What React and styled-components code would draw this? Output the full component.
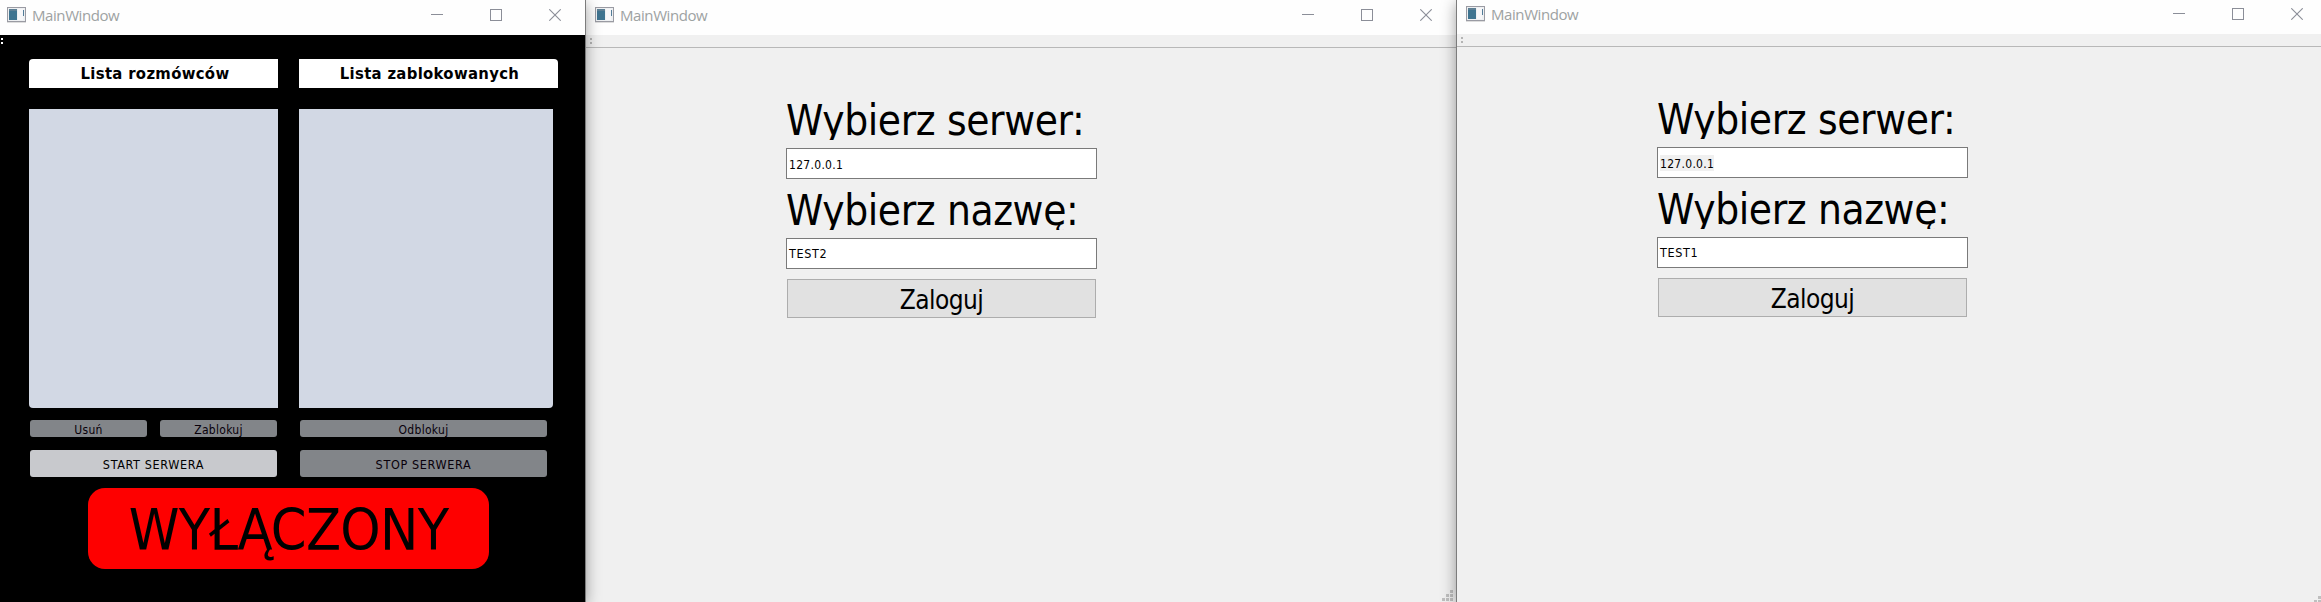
import React from 'react';
import styled, { createGlobalStyle } from 'styled-components';

const Global = createGlobalStyle`
  * { box-sizing: border-box; }
  body { margin: 0; background: #f0f0f0; overflow: hidden; }
  button, input { font-family: inherit; }
`;

const Desktop = styled.div`
  display: grid;
  grid-template-columns: 586px 870px 865px;
  width: 2321px;
  height: 602px;
  overflow: hidden;
  font-family: 'DejaVu Sans Condensed', 'DejaVu Sans', sans-serif;
  font-stretch: condensed;
  color: #000;
`;

const Window = styled.section`
  position: relative;
  z-index: ${p => (p.$raised ? 2 : 1)};
  display: flex;
  flex-direction: column;
  min-width: 0;
  height: 602px;
  background: ${p => (p.$dark ? '#000' : '#f0f0f0')};
  border: 0 solid #7c7c7c;
  border-right-width: ${p => (p.$edge === 'right' ? 1 : 0)}px;
  border-left-width: ${p => (p.$edge === 'left' ? 1 : 0)}px;
  box-shadow: ${p => (p.$raised ? '0 3px 14px rgba(0, 0, 0, 0.38)' : 'none')};
`;

const TitleBar = styled.header`
  display: flex;
  align-items: center;
  flex: none;
  height: ${p => p.$height}px;
  padding: 0 ${p => p.$right}px 6px ${p => p.$left}px;
  background: #fefefe;
`;

const Caption = styled.span`
  flex: 1;
  margin-left: 6px;
  font: 400 15px/28px 'Open Sans', sans-serif;
  letter-spacing: -0.42px;
  color: #9da2a2;
`;

const Controls = styled.div`
  display: flex;
  gap: 47px;
  svg { display: block; }
`;

const ToolBar = styled.div`
  flex: none;
  height: 13px;
  padding: 3px 0 0 ${p => p.$left}px;
  border-bottom: 1px solid ${p => (p.$dark ? '#000' : '#b8b8b8')};
  svg { display: block; }
`;

const ServerBody = styled.div`
  display: grid;
  grid-template-columns: 249px 259px;
  column-gap: 21px;
  padding: 11px 0 0 29px;
`;

const ListHeader = styled.div`
  height: 29px;
  padding-top: 1px;
  background: #fff;
  border-radius: ${p => (p.$side === 'left' ? '4px 0 0 0' : '0 4px 0 0')};
  font-size: 16.5px;
  font-weight: 700;
  line-height: 28px;
  letter-spacing: 0.33px;
  text-align: center;
  padding-left: ${p => (p.$side === 'left' ? 3 : 2)}px;
`;

const UserList = styled.div`
  width: ${p => p.$width}px;
  height: 299px;
  margin-top: 21px;
  background: #d2d8e4;
  border-radius: ${p => (p.$side === 'left' ? '0 0 0 4px' : '0 0 4px 0')};
`;

const Actions = styled.div`
  display: flex;
  gap: 13px;
  margin: ${p => p.$top}px 0 0 1px;
`;

const ServerButton = styled.button`
  width: ${p => p.$width}px;
  height: ${p => (p.$tall ? 27 : 17)}px;
  padding: ${p => (p.$tall ? 2 : 3)}px 0 0;
  border: 0;
  border-radius: 3px;
  background: ${p => (p.$light ? '#c8c9cd' : '#828589')};
  color: ${p => (p.$light ? '#000' : '#08000a')};
  font-size: ${p => (p.$tall ? 12.5 : 12)}px;
  line-height: ${p => (p.$tall ? 25 : 14)}px;
  letter-spacing: ${p => (p.$tall ? 0.65 : 0.3)}px;
`;

const Status = styled.div`
  width: 401px;
  height: 81px;
  margin: 11px 0 0 88px;
  padding-top: 5px;
  border-radius: 17px;
  background: #fe0000;
  font-size: 57px;
  line-height: 75px;
  letter-spacing: -0.7px;
  text-align: center;
`;

const LoginForm = styled.form`
  width: 311px;
  margin: 49px 0 0 200px;
`;

const Label = styled.label`
  display: block;
  height: 43px;
  overflow: hidden;
  font-size: 42px;
  line-height: 47px;
  letter-spacing: -0.4px;
  white-space: nowrap;
`;

const Field = styled.div`
  display: flex;
  align-items: center;
  height: 31px;
  margin: 8px 0 ${p => p.$gap}px;
  padding: 0 0 0 2px;
  border: 1px solid #7a7a7a;
  background: #fff;
`;

const Value = styled.span`
  height: 16px;
  padding: ${p => (p.$wide ? 0 : 1)}px 0 0;
  font-size: ${p => (p.$wide ? 12.5 : 12)}px;
  line-height: ${p => (p.$wide ? 16 : 17)}px;
  letter-spacing: ${p => (p.$wide ? 0.6 : 0.3)}px;
  background: ${p => (p.$marked ? '#f0f0f0' : 'transparent')};
`;

const LoginButton = styled.button`
  display: block;
  width: 309px;
  height: 39px;
  margin-left: 1px;
  padding: 3px 0 0;
  border: 1px solid #adadad;
  background: #e1e1e1;
  color: #000;
  font-size: 26px;
  line-height: 34px;
  letter-spacing: -0.55px;
`;

const Grip = styled.svg`
  position: absolute;
  right: ${p => p.$right}px;
  bottom: ${p => p.$bottom}px;
`;

function AppIcon() {
  return (
    <svg width="19" height="16" viewBox="0 0 19 16" shapeRendering="crispEdges">
      <rect y="14" width="19" height="2" fill="#ddd" />
      <rect x="0.5" y="0.5" width="18" height="14" fill="#eef0f2" stroke="#9a9ba3" />
      <rect x="2" y="2" width="8" height="11" fill="#3f7490" />
      <rect x="2" y="2" width="8" height="2" fill="#5d7f94" />
      <rect x="11" y="2" width="5" height="11" fill="#f7f7f9" />
      <rect x="16" y="3" width="1" height="6" fill="#527c98" />
    </svg>
  );
}

function WindowControls() {
  return (
    <Controls>
      <svg width="12" height="12"><path d="M0 5.5h12" stroke="#8b8e98" /></svg>
      <svg width="12" height="12"><rect x="0.5" y="0.5" width="11" height="11" fill="none" stroke="#8b8e98" /></svg>
      <svg width="12" height="12"><path d="M0.3 0.3L11.7 11.7M11.7 0.3L0.3 11.7" stroke="#8b8e98" strokeWidth="1.1" /></svg>
    </Controls>
  );
}

function Handle({ color }) {
  return (
    <svg width="3" height="7" fill={color} shapeRendering="crispEdges">
      <rect width="2" height="2" />
      <rect y="4" width="2" height="2" />
    </svg>
  );
}

function ResizeGrip({ right, bottom }) {
  const cells = [[8, 0], [4, 4], [8, 4], [0, 8], [4, 8], [8, 8]];
  return (
    <Grip $right={right} $bottom={bottom} width="11" height="11" fill="#bfbfbf" shapeRendering="crispEdges">
      {cells.map(([x, y]) => <rect key={`${x}-${y}`} x={x} y={y} width="3" height="3" />)}
    </Grip>
  );
}

function Bar({ height, left, right }) {
  return (
    <TitleBar $height={height} $left={left} $right={right}>
      <AppIcon />
      <Caption>MainWindow</Caption>
      <WindowControls />
    </TitleBar>
  );
}

function ServerWindow() {
  return (
    <Window $dark $raised $edge="right">
      <Bar height={35} left={7} right={24} />
      <ToolBar $dark $left={1}><Handle color="#fff" /></ToolBar>
      <ServerBody>
        <div>
          <ListHeader $side="left">Lista rozmówców</ListHeader>
          <UserList $side="left" $width={249} />
          <Actions $top={12}>
            <ServerButton $width={117}>Usuń</ServerButton>
            <ServerButton $width={117}>Zablokuj</ServerButton>
          </Actions>
          <Actions $top={13}>
            <ServerButton $tall $light $width={247}>START SERWERA</ServerButton>
          </Actions>
        </div>
        <div>
          <ListHeader $side="right">Lista zablokowanych</ListHeader>
          <UserList $side="right" $width={254} />
          <Actions $top={12}>
            <ServerButton $width={247}>Odblokuj</ServerButton>
          </Actions>
          <Actions $top={13}>
            <ServerButton $tall $width={247}>STOP SERWERA</ServerButton>
          </Actions>
        </div>
      </ServerBody>
      <Status>WYŁĄCZONY</Status>
    </Window>
  );
}

function LoginWindow({ name, marked, raised, edge, bar, grip }) {
  return (
    <Window $raised={raised} $edge={edge}>
      <Bar {...bar} />
      <ToolBar $left={4}><Handle color="#b4b4b4" /></ToolBar>
      <LoginForm>
        <Label>Wybierz serwer:</Label>
        <Field $gap={8}><Value $marked={marked}>127.0.0.1</Value></Field>
        <Label>Wybierz nazwę:</Label>
        <Field $gap={10}><Value $wide>{name}</Value></Field>
        <LoginButton type="button">Zaloguj</LoginButton>
      </LoginForm>
      <ResizeGrip {...grip} />
    </Window>
  );
}

export default function App() {
  return (
    <>
      <Global />
      <Desktop>
        <ServerWindow />
        <LoginWindow name="TEST2" bar={{ height: 35, left: 9, right: 24 }} grip={{ right: 3, bottom: 1 }} />
        <LoginWindow name="TEST1" marked raised edge="left" bar={{ height: 34, left: 9, right: 18 }} grip={{ right: -4, bottom: -1 }} />
      </Desktop>
    </>
  );
}
